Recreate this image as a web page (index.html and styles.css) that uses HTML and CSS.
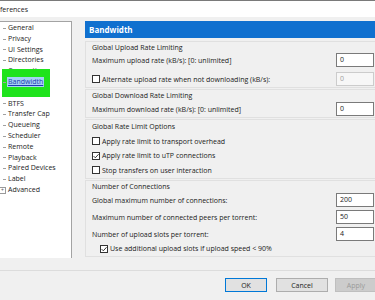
FILE: index.html
```html
<!DOCTYPE html>
<html lang="en">
<head>
    <meta charset="UTF-8">
    <meta name="viewport" content="width=device-width, initial-scale=1.0">
    <title>Preferences</title>
    <link rel="stylesheet" href="styles.css">
</head>
<body>
    <div class="dialog">
        <div class="titlebar"><span class="title">Preferences</span></div>

        <div class="main">
            <div class="tree">
                <div class="item"><span class="twig"></span>General</div>
                <div class="item"><span class="twig"></span>Privacy</div>
                <div class="item"><span class="twig"></span>UI Settings</div>
                <div class="item"><span class="twig"></span>Directories</div>
                <div class="item"><span class="twig"></span>Connection</div>
                <div class="item selected"><span class="twig"></span><span class="label">Bandwidth</span></div>
                <div class="item"><span class="twig"></span>BitTorrent</div>
                <div class="item"><span class="twig"></span>BTFS</div>
                <div class="item"><span class="twig"></span>Transfer Cap</div>
                <div class="item"><span class="twig"></span>Queueing</div>
                <div class="item"><span class="twig"></span>Scheduler</div>
                <div class="item"><span class="twig"></span>Remote</div>
                <div class="item"><span class="twig"></span>Playback</div>
                <div class="item"><span class="twig"></span>Paired Devices</div>
                <div class="item"><span class="twig"></span>Label</div>
                <div class="item"><span class="expander">+</span>Advanced</div>
                <!-- highlight marker drawn over the tree -->
                <div class="marker"></div>
            </div>

            <div class="pane">
                <div class="pane-header">Bandwidth</div>

                <div class="group g1">
                    <div class="caption">Global Upload Rate Limiting</div>
                    <div class="row">
                        <span>Maximum upload rate (kB/s): [0: unlimited]</span>
                        <span class="field">0</span>
                    </div>
                    <div class="row gap5">
                        <span class="check"><span class="box"></span>Alternate upload rate when not downloading (kB/s):</span>
                        <span class="field disabled">0</span>
                    </div>
                </div>

                <div class="group g2">
                    <div class="caption">Global Download Rate Limiting</div>
                    <div class="row">
                        <span>Maximum download rate (kB/s): [0: unlimited]</span>
                        <span class="field">0</span>
                    </div>
                </div>

                <div class="group g3">
                    <div class="caption">Global Rate Limit Options</div>
                    <div class="row tall"><span class="check"><span class="box"></span>Apply rate limit to transport overhead</span></div>
                    <div class="row tall">
                        <span class="check">
                            <span class="box"><svg viewBox="0 0 8 8" width="8" height="8"><path d="M1.6 4.1 L3.3 5.8 L6.6 2.2" fill="none" stroke="#222" stroke-width="0.9"/></svg></span>Apply rate limit to uTP connections
                        </span>
                    </div>
                    <div class="row tall"><span class="check"><span class="box"></span>Stop transfers on user interaction</span></div>
                </div>

                <div class="group g4">
                    <div class="caption">Number of Connections</div>
                    <div class="row">
                        <span>Global maximum number of connections:</span>
                        <span class="field">200</span>
                    </div>
                    <div class="row gap3">
                        <span>Maximum number of connected peers per torrent:</span>
                        <span class="field">50</span>
                    </div>
                    <div class="row gap3">
                        <span>Number of upload slots per torrent:</span>
                        <span class="field">4</span>
                    </div>
                    <div class="row last">
                        <span class="check indent">
                            <span class="box"><svg viewBox="0 0 8 8" width="8" height="8"><path d="M1.6 4.1 L3.3 5.8 L6.6 2.2" fill="none" stroke="#222" stroke-width="0.9"/></svg></span>Use additional upload slots if upload speed &lt; 90%
                        </span>
                    </div>
                </div>
            </div>
        </div>

        <div class="footer">
            <button class="btn default">OK</button>
            <button class="btn cancel">Cancel</button>
            <button class="btn apply" disabled>Apply</button>
        </div>
    </div>
</body>
</html>
```

FILE: styles.css
```css
body {
    margin: 0;
    overflow: hidden;
    font-family: 'Open Sans', 'Noto Sans', sans-serif;
    font-size: 7px;
    color: #1a1a1a;
    background: #f0f0f0;
}

.dialog {
    width: 390px;
    height: 300px;
    background: #f0f0f0;
}

.titlebar {
    height: 16px;
    background: white;
    border-top: 1px solid #7a7a7a;
    display: flex;
    align-items: center;
}

.title {
    margin-left: -11px;
}

.main {
    display: grid;
    grid-template-columns: 72px 1fr;
    column-gap: 13px;
    padding-top: 4px;
}

/* tree on the left */
.tree {
    position: relative;
    background: white;
    border-top: 1px solid #a3a3a3;
    border-right: 1px solid #a3a3a3;
    padding-top: 1px;
}

.item {
    height: 10.8px;
    line-height: 10.8px;
    display: flex;
    align-items: center;
    white-space: nowrap;
}

.twig {
    width: 3px;
    height: 1px;
    margin: 0 2px 0 3px;
    background: #a0a0a0;
}

.expander {
    width: 5px;
    height: 5px;
    margin: 0 2px 0 -1px;
    border: 1px solid #9a9a9a;
    font-size: 5px;
    line-height: 5px;
    text-align: center;
    color: #555;
}

.item.selected {
    position: relative;
    z-index: 2;
}

.item.selected .label {
    background: #a6d2f5;
    color: #1d3cb3;
    text-decoration: underline;
    padding: 0 1px;
    margin-left: -1px;
    line-height: 10px;
}

.marker {
    position: absolute;
    left: 2px;
    top: 47px;
    width: 48px;
    height: 28px;
    background: #1fe31c;
    z-index: 1;
}

/* settings pane */
.pane {
    display: flex;
    flex-direction: column;
}

.pane-header {
    height: 17px;
    line-height: 17px;
    background: #1070cf;
    color: white;
    font-weight: bold;
    font-size: 8px;
    padding-left: 4px;
    margin-bottom: 3px;
}

.group {
    border: 1px solid #e0e0e0;
    padding: 0 15px 1px 6px;
    margin-bottom: 1px;
}

.caption {
    height: 12px;
    line-height: 12px;
    white-space: nowrap;
}

.g1 .caption {
    height: 11px;
    line-height: 11px;
}

.g3 .caption {
    height: 14px;
    line-height: 14px;
}

.g3 {
    padding-bottom: 0.5px;
}

.row {
    height: 14px;
    display: flex;
    align-items: center;
    justify-content: space-between;
    white-space: nowrap;
}

.row.tall {
    height: 14.5px;
}

.row.gap5 {
    margin-top: 5px;
}

.row.gap3 {
    margin-top: 3px;
}

.row.last {
    height: 15px;
}

.g4 {
    padding-bottom: 0;
}

.field {
    box-sizing: border-box;
    width: 38px;
    height: 14px;
    line-height: 12px;
    border: 1px solid #7a7a7a;
    background: white;
    padding-left: 3px;
}

.field.disabled {
    border-color: #cccccc;
    background: #f7f7f7;
    color: #a0a0a0;
}

.check {
    display: flex;
    align-items: center;
}

.check.indent {
    margin-left: 8px;
}

.box {
    box-sizing: border-box;
    width: 8px;
    height: 8px;
    border: 1px solid #333;
    background: white;
    margin-right: 2px;
    display: flex;
    align-items: center;
    justify-content: center;
}

.box svg {
    flex: none;
}

/* footer buttons */
.footer {
    margin-top: 12px;
    border-top: 1px solid #dcdcdc;
    padding: 7px 13px 0 0;
    display: flex;
    justify-content: flex-end;
}

.btn {
    box-sizing: border-box;
    height: 14px;
    padding: 0;
    font-family: inherit;
    font-size: 7px;
    color: #1a1a1a;
    background: #e1e1e1;
    border: 1px solid #adadad;
}

.btn.default {
    width: 42px;
    border-color: #0078d7;
}

.btn.cancel {
    width: 52px;
    margin-left: 9px;
}

.btn.apply {
    width: 42px;
    margin-left: 7px;
    background: #cccccc;
    border-color: #bfbfbf;
    color: #9a9a9a;
}
```
